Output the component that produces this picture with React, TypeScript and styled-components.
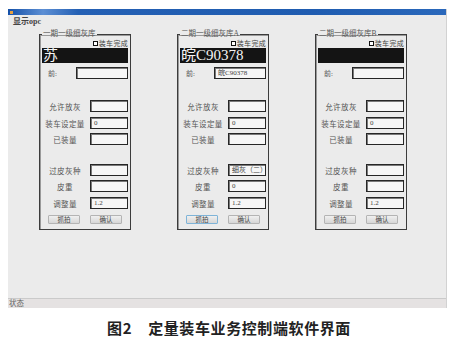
import styled, { createGlobalStyle } from 'styled-components';

const GlobalStyle = createGlobalStyle`
  html, body {
    margin: 0;
    padding: 0;
    background: #ffffff;
  }
  body {
    font-family: "Liberation Serif", "Noto Sans CJK SC", serif;
    color: #333;
  }
`;

type Panel = {
  title: string;
  plate: string;
  front: string;
  kind: string;
  tare: string;
  focused: boolean;
};

const panels: Panel[] = [
  { title: '一期一级细灰库', plate: '苏', front: '', kind: '', tare: '', focused: false },
  { title: '二期一级细灰库A', plate: '皖C90378', front: '皖C90378', kind: '细灰（二）', tare: '0', focused: true },
  { title: '二期一级细灰库B', plate: '', front: '', kind: '', tare: '', focused: false },
];

const Field = ({ label, value, gap }: { label: string; value: string; gap: number }) => (
  <Row $gap={gap}>
    <Label>{label}</Label>
    <Input>{value}</Input>
  </Row>
);

const LoadPanel = ({ panel }: { panel: Panel }) => (
  <Group>
    <Legend>{panel.title}</Legend>
    <CheckRow>
      <CheckBox />
      装车完成
    </CheckRow>
    <Plate>{panel.plate}</Plate>
    <FrontRow>
      <FrontLabel>前:</FrontLabel>
      <FrontInput>{panel.front}</FrontInput>
    </FrontRow>
    <Field label="允许放灰" value="" gap={21} />
    <Field label="装车设定量" value="0" gap={5} />
    <Field label="已装量" value="" gap={4} />
    <Field label="过皮灰种" value={panel.kind} gap={19} />
    <Field label="皮重" value={panel.tare} gap={4} />
    <Field label="调整量" value="1.2" gap={5} />
    <Buttons>
      <Button $focused={panel.focused}>抓拍</Button>
      <Button $focused={false}>确认</Button>
    </Buttons>
  </Group>
);

export default function App() {
  return (
    <>
      <GlobalStyle />
      <Window>
        <TitleBar>
          <TitleIcon />
        </TitleBar>
        <Menu>显示opc</Menu>
        <PanelRow>
          {panels.map((p) => (
            <LoadPanel key={p.title} panel={p} />
          ))}
        </PanelRow>
        <StatusBar>状态</StatusBar>
      </Window>
      <Caption>
        图2<CaptionGap />定量装车业务控制端软件界面
      </Caption>
    </>
  );
}

const Window = styled.div`
  margin: 9px 0 0 8px;
  width: 439px;
  height: 299px;
  display: flex;
  flex-direction: column;
  background: #ebebeb;
  border-right: 1px solid #d2d2d2;
  box-sizing: border-box;
`;

const TitleBar = styled.div`
  height: 6px;
  display: flex;
  align-items: center;
  padding-left: 2px;
  background: linear-gradient(90deg, #1450a8 0%, #5d8fd4 8%, #2460b4 16%, #1f5cb0 70%, #2a68bb 100%);
`;

const TitleIcon = styled.span`
  width: 3px;
  height: 3px;
  background: #e8a040;
`;

const Menu = styled.div`
  height: 14px;
  line-height: 14px;
  padding-left: 5px;
  font-size: 8px;
  font-weight: bold;
  color: #444;
`;

const PanelRow = styled.div`
  flex: 1;
  display: flex;
  align-items: flex-start;
  gap: 46px;
  padding-left: 31px;
`;

const Group = styled.fieldset`
  margin: 0;
  width: 92px;
  box-sizing: border-box;
  padding: 0 2px 5px 2px;
  border: 1px solid #3c3c3c;
  box-shadow: inset 1px 1px 0 #9a9a9a;
  display: flex;
  flex-direction: column;
  min-inline-size: 0;
`;

const Legend = styled.legend`
  padding: 0 1px;
  margin-left: 0;
  font-size: 7.5px;
  line-height: 10px;
  height: 10px;
  color: #555;
  white-space: nowrap;
`;

const CheckRow = styled.div`
  height: 8px;
  display: flex;
  align-items: center;
  justify-content: flex-end;
  gap: 1px;
  font-size: 7px;
  letter-spacing: 0.3px;
  color: #444;
`;

const CheckBox = styled.span`
  width: 3px;
  height: 3px;
  border: 1px solid #111;
  background: #fff;
`;

const Plate = styled.div`
  margin-top: 1px;
  height: 15px;
  line-height: 15px;
  padding-left: 1px;
  background: #141414;
  color: #f4f4f4;
  font-family: "Liberation Serif", "Noto Sans CJK SC", serif;
  font-size: 15px;
  white-space: nowrap;
  overflow: hidden;
`;

const FrontRow = styled.div`
  margin-top: 4px;
  height: 12px;
  display: flex;
  align-items: center;
`;

const FrontLabel = styled.span`
  width: 34px;
  padding-left: 6px;
  box-sizing: border-box;
  font-size: 7px;
  color: #555;
`;

const Input = styled.div`
  width: 38px;
  height: 12px;
  box-sizing: border-box;
  border: 1px solid #262626;
  box-shadow: inset 1px 1px 0 #7a7a7a;
  background: #f6f6f6;
  padding-left: 3px;
  font-size: 7px;
  line-height: 10px;
  color: #444;
  white-space: nowrap;
  overflow: hidden;
`;

const FrontInput = styled(Input)`
  width: 52px;
`;

const Row = styled.div<{ $gap: number }>`
  margin-top: ${(p) => p.$gap}px;
  height: 12px;
  display: flex;
  align-items: center;
  justify-content: space-between;
`;

const Label = styled.span`
  width: 46px;
  text-align: center;
  font-size: 7.5px;
  letter-spacing: 0.4px;
  color: #555;
  white-space: nowrap;
`;

const Buttons = styled.div`
  margin-top: 6px;
  display: flex;
  justify-content: center;
  gap: 10px;
`;

const Button = styled.button<{ $focused: boolean }>`
  width: 32px;
  height: 9px;
  padding: 0;
  box-sizing: border-box;
  border: 1px solid ${(p) => (p.$focused ? '#7fb4d8' : '#b4b4b4')};
  border-radius: 1px;
  background: linear-gradient(#f0f0f0, #d6d6d6);
  font-family: "Noto Sans CJK SC", sans-serif;
  font-size: 6.5px;
  line-height: 7px;
  color: #444;
`;

const StatusBar = styled.div`
  height: 10px;
  box-sizing: border-box;
  border-top: 1px solid #cacaca;
  background: #e5e2e2;
  padding-left: 1px;
  font-size: 7.5px;
  line-height: 9px;
  color: #666;
`;

const Caption = styled.div`
  margin-top: 11px;
  text-align: center;
  font-family: "Noto Sans CJK SC", sans-serif;
  font-weight: bold;
  font-size: 15px;
  line-height: 18px;
  letter-spacing: 0.6px;
  color: #222;
`;

const CaptionGap = styled.span`
  display: inline-block;
  width: 16px;
`;
